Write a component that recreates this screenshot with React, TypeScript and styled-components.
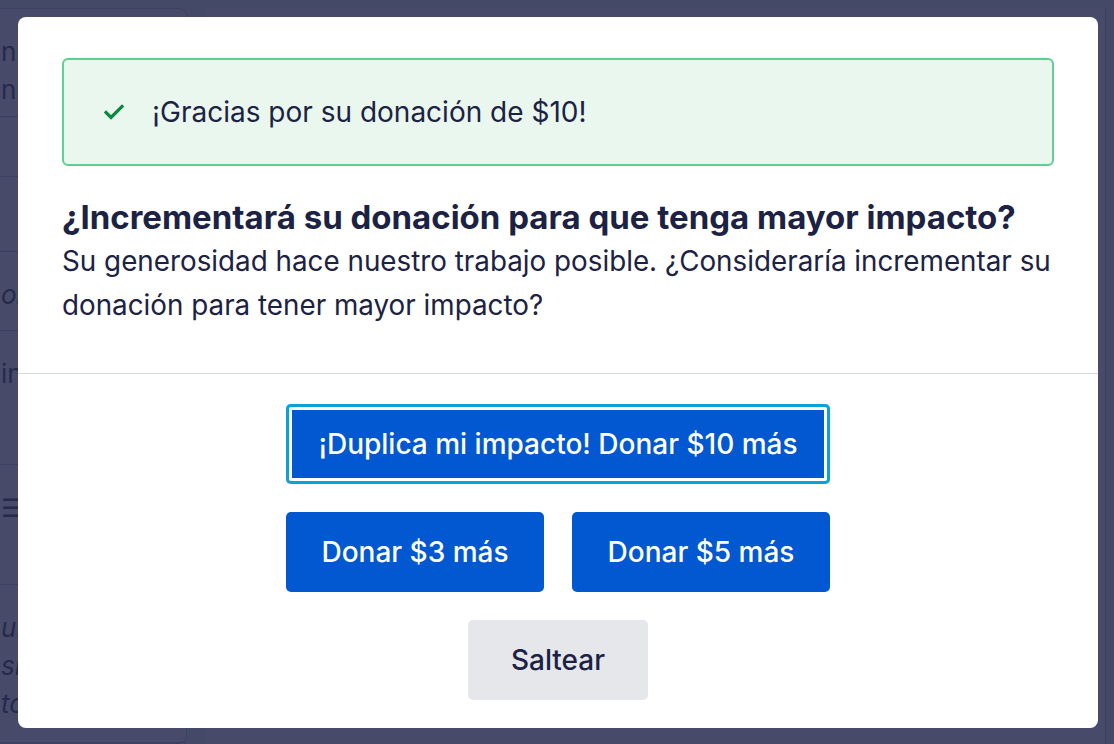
import React from 'react'
import styled, { createGlobalStyle, css } from 'styled-components'

const GlobalStyle = createGlobalStyle`
  html, body {
    margin: 0;
    padding: 0;
    height: 100%;
    overflow: hidden;
  }
  body {
    font-family: Inter, "Noto Sans", "Liberation Sans", sans-serif;
    background: #f4f5f8;
    color: #1c2244;
  }
`

const Page = styled.div`
  display: flex;
  gap: 20px;
  height: 744px;
  padding-top: 8px;
  box-sizing: border-box;
`

const SideCard = styled.div`
  width: 186px;
  flex: 0 0 auto;
  border: 1px solid #c9ced8;
  border-left: none;
  border-radius: 0 8px 8px 0;
  background: #fff;
  display: flex;
  flex-direction: column;
`

const SideRow = styled.div<{ $h: number; $italic?: boolean }>`
  height: ${(p) => p.$h}px;
  border-bottom: 1px solid #c9ced8;
  padding: 24px 0 0 1px;
  box-sizing: border-box;
  font-size: 26px;
  line-height: 38px;
  color: #555b70;
  font-style: ${(p) => (p.$italic ? 'italic' : 'normal')};
`

const MainArea = styled.div`
  flex: 1;
  border-right: 1px solid #c9ced8;
  margin-right: 8px;
  background: #fff;
`

const Overlay = styled.div`
  position: fixed;
  inset: 0;
  padding-left: 2px;
  background: rgba(25, 30, 68, 0.8);
  display: flex;
  align-items: center;
  justify-content: center;
`

const Modal = styled.div`
  width: 1080px;
  background: #fff;
  border-radius: 8px;
  overflow: hidden;
`

const ModalHeader = styled.div`
  padding: 41px 44px 46px;
  border-bottom: 1px solid #d3d9e1;
`

const Alert = styled.div`
  display: flex;
  align-items: center;
  gap: 28px;
  padding: 30px 40px;
  background: #eaf7ee;
  border: 2px solid #5fd08f;
  border-radius: 6px;
  font-size: 28px;
  line-height: 44px;
  color: #1c2244;
`

const CheckIcon = styled.svg`
  width: 20px;
  height: 16px;
  flex: 0 0 auto;
`

const Heading = styled.h2`
  margin: 29px 0 0;
  font-size: 33px;
  line-height: 44px;
  font-weight: 700;
  color: #1c2244;
`

const Body = styled.p`
  margin: 0;
  font-size: 27.8px;
  line-height: 44px;
  color: #1c2244;
`

const Actions = styled.div`
  padding: 30px 0 28px;
  display: flex;
  flex-direction: column;
  align-items: center;
  gap: 28px;
`

const ButtonGrid = styled.div`
  display: grid;
  grid-template-columns: 258px 258px;
  gap: 28px;
`

const Button = styled.button<{ $variant?: 'primary' | 'secondary'; $focused?: boolean; $wide?: boolean }>`
  height: 80px;
  border: none;
  border-radius: 5px;
  font-family: inherit;
  font-size: 28px;
  font-weight: 500;
  cursor: pointer;
  background: #0158d1;
  color: #fff;
  padding: 0 30px;
  ${(p) => p.$wide && css`grid-column: 1 / span 2;`}
  ${(p) =>
    p.$focused &&
    css`
      box-shadow: inset 0 0 0 3px #0aa2d8, inset 0 0 0 6px #fff;
    `}
  ${(p) =>
    p.$variant === 'secondary' &&
    css`
      background: #e5e7eb;
      color: #1c2244;
      width: 180px;
    `}
`

const App = () => (
  <>
    <GlobalStyle />
    <Page>
      <SideCard>
        <SideRow $h={109}>n i<br />n</SideRow>
        <SideRow $h={61} />
        <SideRow $h={76} />
        <SideRow $h={80} $italic>on</SideRow>
        <SideRow $h={135}>in</SideRow>
        <SideRow $h={122}>☰</SideRow>
        <SideRow $h={160} $italic>ur<br />sic<br />to</SideRow>
      </SideCard>
      <MainArea />
    </Page>
    <Overlay>
      <Modal>
        <ModalHeader>
          <Alert>
            <CheckIcon viewBox="0 0 20 16">
              <path d="M2 8.5l5 5L18 2.5" fill="none" stroke="#0a8a3c" strokeWidth="3.2" strokeLinecap="square" />
            </CheckIcon>
            ¡Gracias por su donación de $10!
          </Alert>
          <Heading>¿Incrementará su donación para que tenga mayor impacto?</Heading>
          <Body>
            Su generosidad hace nuestro trabajo posible. ¿Consideraría incrementar su donación para tener mayor impacto?
          </Body>
        </ModalHeader>
        <Actions>
          <ButtonGrid>
            <Button $wide $focused>¡Duplica mi impacto! Donar $10 más</Button>
            <Button>Donar $3 más</Button>
            <Button>Donar $5 más</Button>
          </ButtonGrid>
          <Button $variant="secondary">Saltear</Button>
        </Actions>
      </Modal>
    </Overlay>
  </>
)

export default App
